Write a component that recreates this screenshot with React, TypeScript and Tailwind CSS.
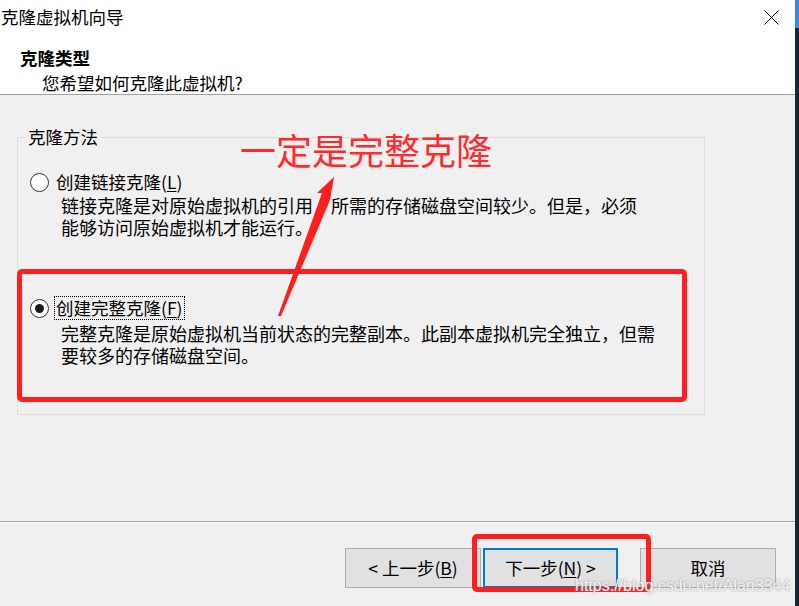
import React from 'react';

const cjk = "font-['Noto_Sans_CJK_SC','Noto_Sans',sans-serif]";

function Radio({ checked }: { checked: boolean }) {
  return (
    <span className="w-[19px] h-[19px] rounded-full border border-[#333333] bg-white flex items-center justify-center shrink-0">
      {checked && <span className="w-[9px] h-[9px] rounded-full bg-[#1a1a1a]" />}
    </span>
  );
}

function Option({
  label,
  hotkey,
  lines,
  checked,
}: {
  label: string;
  hotkey: string;
  lines: string[];
  checked: boolean;
}) {
  return (
    <div>
      <div className="flex items-center h-[24px]">
        <Radio checked={checked} />
        <span
          className={
            'ml-[5px] px-[1px] h-[24px] flex items-center text-[17.5px] ' +
            (checked ? 'border border-dotted border-black' : 'border border-transparent')
          }
        >
          {label}(<span className="underline underline-offset-2">{hotkey}</span>)
        </span>
      </div>
      <div className={'ml-[31px] text-[18px] leading-[22px] ' + (checked ? 'mt-[2px]' : '')}>
        {lines.map((l) => (
          <div key={l}>{l}</div>
        ))}
      </div>
    </div>
  );
}

export default function App() {
  return (
    <div className={`relative w-[799px] h-[606px] flex bg-[#f0f0f0] text-black overflow-hidden ${cjk}`}>
      <div className="w-[795px] flex flex-col">
        {/* header */}
        <div className="h-[95px] bg-white border-b border-[#a0a0a0]">
          <div className="h-[34px] flex items-center justify-between pl-[1px] pr-[16px]">
            <span className="text-[17.5px]">克隆虚拟机向导</span>
            <svg width="15" height="15" viewBox="0 0 15 15">
              <path d="M0.5 0.5 L14.5 14.5 M14.5 0.5 L0.5 14.5" stroke="#000" strokeWidth="1" />
            </svg>
          </div>
          <div className="mt-[12px] pl-[20px] h-[24px] flex items-center text-[17.5px] font-bold">克隆类型</div>
          <div className="mt-[1px] pl-[42px] h-[24px] flex items-center text-[17.5px]">您希望如何克隆此虚拟机?</div>
        </div>

        {/* body */}
        <div className="flex-1">
          <fieldset className="ml-[17px] mt-[31px] w-[688px] h-[289px] border border-[#dcdcdc] px-[12px]">
            <legend className="ml-[-5px] px-[3px] text-[17.5px] leading-[22px]">克隆方法</legend>
            <div className="mt-[22px]">
              <Option
                label="创建链接克隆"
                hotkey="L"
                checked={false}
                lines={['链接克隆是对原始虚拟机的引用，所需的存储磁盘空间较少。但是，必须', '能够访问原始虚拟机才能运行。']}
              />
            </div>
            <div className="mt-[58px]">
              <Option
                label="创建完整克隆"
                hotkey="F"
                checked={true}
                lines={['完整克隆是原始虚拟机当前状态的完整副本。此副本虚拟机完全独立，但需', '要较多的存储磁盘空间。']}
              />
            </div>
          </fieldset>
        </div>

        {/* footer */}
        <div className="border-t border-[#a0a0a0] h-[85px]">
          <div className="h-px bg-white" />
          <div className="flex justify-end pr-[19px] pt-[25px]">
            <button className="w-[136px] h-[40px] border border-[#adadad] bg-[#e1e1e1] text-[17.5px]">
              &lt; 上一步(<span className="underline underline-offset-2">B</span>)
            </button>
            <button className="ml-[2px] w-[135px] h-[40px] border-2 border-[#0078d7] bg-[#e1e1e1] text-[17.5px]">
              下一步(<span className="underline underline-offset-2">N</span>) &gt;
            </button>
            <button className="ml-[22px] w-[136px] h-[40px] border border-[#adadad] bg-[#e1e1e1] text-[17.5px]">
              取消
            </button>
          </div>
        </div>
      </div>

      {/* window edge */}
      <div className="w-[4px] flex flex-col">
        <div className="h-[28px] bg-[#3b8ad9]" />
        <div className="flex-1 bg-[#1c2533]" />
      </div>

      {/* annotations */}
      <div className="absolute left-[240px] top-[131px] text-[36px] leading-[36px] text-[#ff2a2a]">一定是完整克隆</div>
      <svg className="absolute left-0 top-0 pointer-events-none" width="799" height="606" viewBox="0 0 799 606">
        <polygon points="334,177 317,193 322,193 278,316 281,316 330,200" fill="#ff1e1e" />
      </svg>
      <div className="absolute left-[17px] top-[269px] w-[670px] h-[133px] border-[5px] border-[#ff1e1e] rounded-[5px]" />
      <div className="absolute left-[472px] top-[534px] w-[179px] h-[58px] border-[5px] border-[#ff1e1e] rounded-[5px]" />
      <div className="absolute left-[575px] top-[576px] text-[16px] leading-[20px] text-[#f4f4f4] font-['Liberation_Sans',sans-serif] [text-shadow:0_0_2px_#8a8a8a]">
        https://blog.csdn.net/Alan3344
      </div>
    </div>
  );
}
